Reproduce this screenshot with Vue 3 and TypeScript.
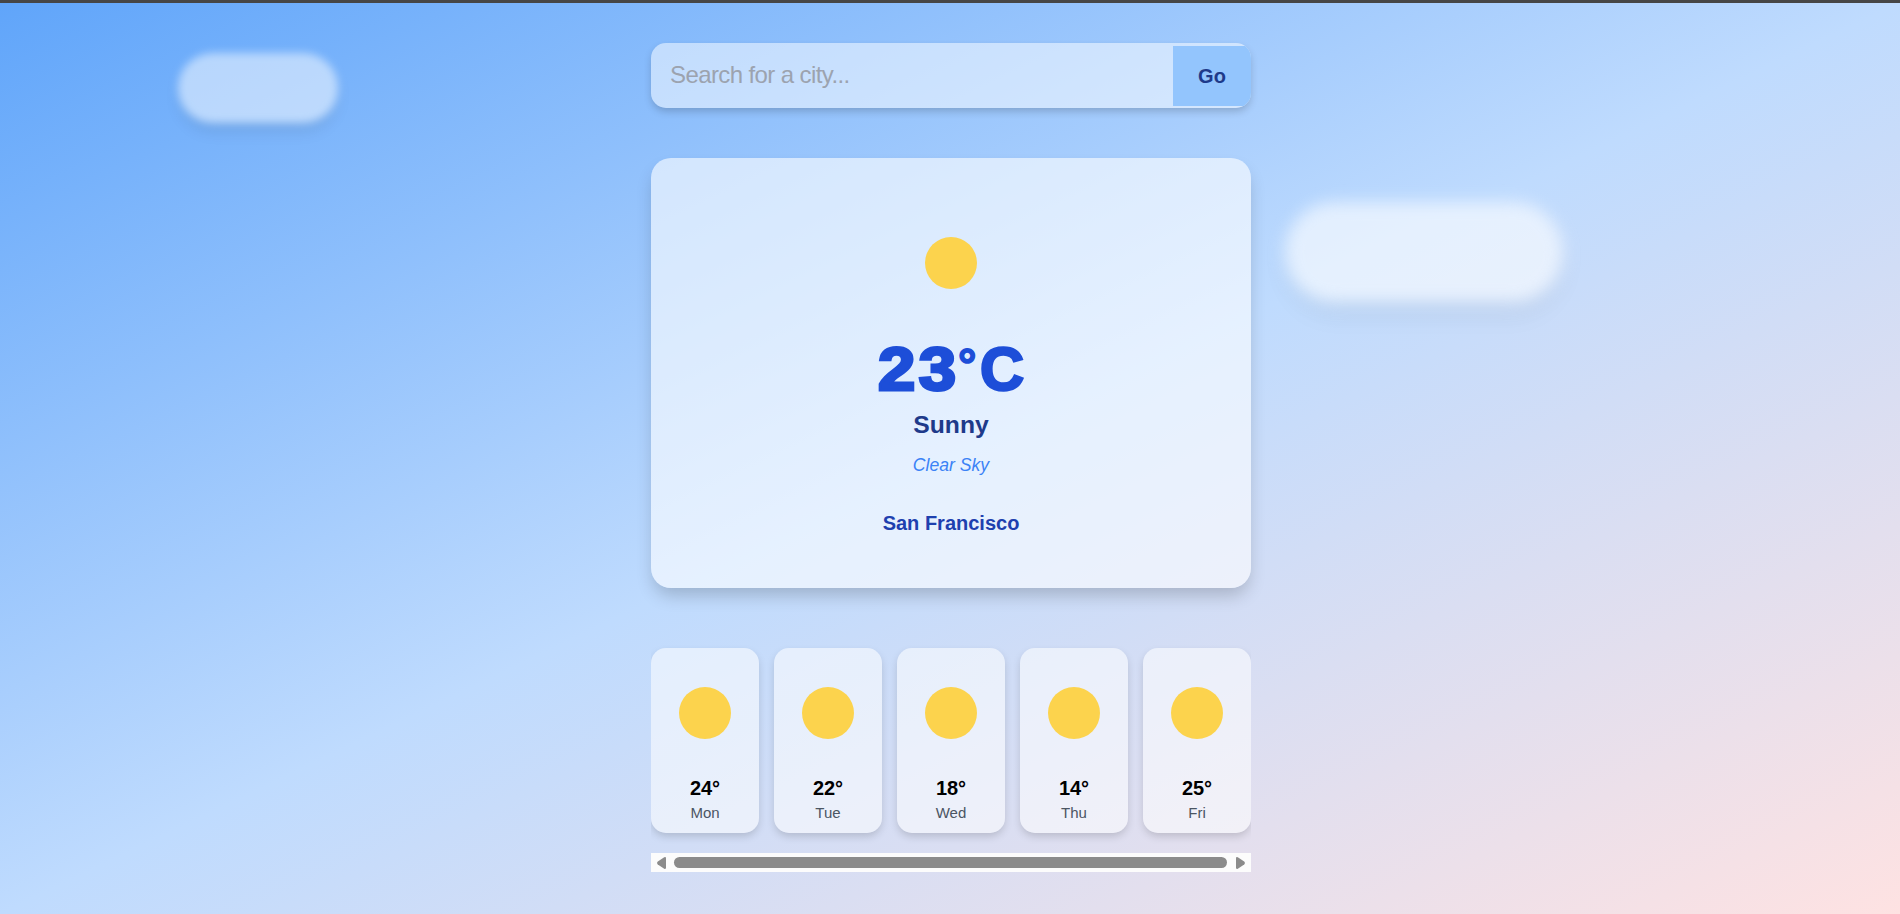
<script setup lang="ts">
import { ref } from 'vue'

interface ForecastDay {
  day: string
  temp: number
}

const query = ref('')
const forecast: ForecastDay[] = [
  { day: 'Mon', temp: 24 },
  { day: 'Tue', temp: 22 },
  { day: 'Wed', temp: 18 },
  { day: 'Thu', temp: 14 },
  { day: 'Fri', temp: 25 },
]
</script>

<template>
  <div class="app">
    <div class="cloud cloud-small"></div>
    <div class="cloud cloud-large"></div>
    <main class="column">
      <form class="search" @submit.prevent>
        <input v-model="query" class="search-input" type="text" placeholder="Search for a city..." />
        <button class="search-button" type="submit">Go</button>
      </form>

      <section class="current">
        <svg class="sun" width="100" height="100" viewBox="0 0 100 100">
          <circle cx="50" cy="50" r="26" fill="#fcd34d" />
        </svg>
        <div class="temperature"><span class="digits">23</span><span class="degree">°</span><span>C</span></div>
        <div class="condition">Sunny</div>
        <div class="description">Clear Sky</div>
        <div class="city">San Francisco</div>
      </section>

      <section class="forecast">
        <div class="days">
          <article v-for="item in forecast" :key="item.day" class="day">
            <svg class="day-sun" width="52" height="52" viewBox="0 0 52 52">
              <circle cx="26" cy="26" r="26" fill="#fcd34d" />
            </svg>
            <div class="day-temp">{{ item.temp }}°</div>
            <div class="day-name">{{ item.day }}</div>
          </article>
        </div>
        <div class="scrollbar">
          <svg width="9" height="12" viewBox="0 0 9 12">
            <path d="M7.2 0.3 L0.8 4.6 Q-0.6 6 0.8 7.4 L7.2 11.7 Q9 12.4 9 10.8 V1.2 Q9 -0.4 7.2 0.3Z" fill="#8b8b8b" />
          </svg>
          <div class="thumb"></div>
          <svg width="9" height="12" viewBox="0 0 9 12">
            <path d="M1.8 0.3 L8.2 4.6 Q9.6 6 8.2 7.4 L1.8 11.7 Q0 12.4 0 10.8 V1.2 Q0 -0.4 1.8 0.3Z" fill="#8b8b8b" />
          </svg>
        </div>
      </section>
    </main>
  </div>
</template>

<style>
body {
  margin: 0;
  overflow: hidden;
}
</style>

<style scoped>
.app {
  position: relative;
  box-sizing: border-box;
  height: 914px;
  border-top: 3px solid #464646;
  background: linear-gradient(to bottom right, #60a5fa 0%, #bfdbfe 50%, #fee2e2 100%);
  font-family: "Liberation Sans", Arial, sans-serif;
  overflow: hidden;
}

.cloud {
  position: absolute;
  border-radius: 50px;
  background: #fff;
}

.cloud-small {
  left: 178px;
  top: 50px;
  width: 160px;
  height: 70px;
  opacity: 0.5;
  filter: blur(4px);
  box-shadow: 0 10px 15px -3px rgba(0, 0, 0, 0.2);
}

.cloud-large {
  left: 1285px;
  top: 199px;
  width: 278px;
  height: 100px;
  opacity: 0.6;
  filter: blur(8px);
  box-shadow: 0 15px 25px -3px rgba(0, 0, 0, 0.1);
}

.column {
  position: relative;
  width: 600px;
  margin-left: 651px;
  padding-top: 40px;
}

.search {
  display: flex;
  align-items: center;
  height: 65px;
  border-radius: 15px;
  background: rgba(255, 255, 255, 0.5);
  box-shadow: 0 4px 8px -1px rgba(0, 0, 0, 0.2);
  overflow: hidden;
}

.search-input {
  flex: 1;
  min-width: 0;
  height: 60px;
  box-sizing: border-box;
  padding: 0 19px 2px;
  border: 0;
  outline: 0;
  background: transparent;
  font: 24px "Liberation Sans", Arial, sans-serif;
  letter-spacing: -0.6px;
}

.search-input::placeholder {
  color: #9ca3af;
  opacity: 1;
}

.search-button {
  width: 78px;
  height: 60px;
  padding: 1px 0 0;
  border: 0;
  background: #93c5fd;
  color: #1e3a8a;
  font: bold 20px "Liberation Sans", Arial, sans-serif;
}

.current {
  display: flex;
  flex-direction: column;
  align-items: center;
  box-sizing: border-box;
  height: 430px;
  margin-top: 50px;
  padding-top: 55px;
  border-radius: 20px;
  background: rgba(255, 255, 255, 0.6);
  box-shadow: 0 10px 18px -3px rgba(0, 0, 0, 0.2);
}

.temperature {
  display: flex;
  margin-top: 24px;
  line-height: 64px;
  font-size: 61px;
  font-weight: 900;
  color: #1d4ed8;
  -webkit-text-stroke: 2.5px #1d4ed8;
}

.digits {
  transform: scaleX(1.1);
  transform-origin: left;
  letter-spacing: 3.2px;
  margin-right: 6px;
  -webkit-text-stroke-width: 3px;
}

.degree {
  width: 22px;
  line-height: 56px;
  font-size: 46px;
  -webkit-text-stroke-width: 1.5px;
}

.condition {
  margin-top: 8px;
  line-height: 32px;
  font-size: 24.7px;
  font-weight: 700;
  color: #1e3a8a;
}

.description {
  margin-top: 14px;
  line-height: 20px;
  font-size: 17.6px;
  font-style: italic;
  color: #3b82f6;
}

.city {
  margin-top: 36px;
  line-height: 24px;
  font-size: 20px;
  font-weight: 700;
  color: #1e40af;
}

.days {
  display: flex;
  gap: 15px;
  margin-top: 30px;
  padding: 30px 0 20px;
  overflow: hidden;
}

.day {
  display: flex;
  flex-direction: column;
  align-items: center;
  box-sizing: border-box;
  width: 108px;
  height: 185px;
  padding-top: 39px;
  border-radius: 15px;
  background: rgba(255, 255, 255, 0.55);
  box-shadow: 0 4px 8px -1px rgba(0, 0, 0, 0.17);
}

.day-temp {
  margin-top: 37px;
  line-height: 24px;
  font-size: 20px;
  font-weight: 700;
  letter-spacing: -0.1px;
  color: #000;
}

.day-name {
  margin-top: 4px;
  line-height: 18px;
  font-size: 15px;
  color: #4b5563;
}

.scrollbar {
  display: flex;
  align-items: center;
  justify-content: space-between;
  box-sizing: border-box;
  height: 19px;
  padding: 0 6px;
  background: #fcfcfc;
}

.thumb {
  width: 553px;
  height: 11px;
  margin-right: 1px;
  border-radius: 6px;
  background: #8b8b8b;
}
</style>
